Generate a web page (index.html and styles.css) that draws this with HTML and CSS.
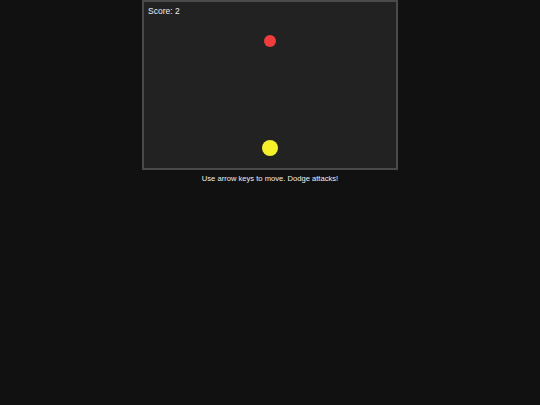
FILE: index.html
```html
<!DOCTYPE html>
<html>
<head>
<meta charset="utf-8">
<link rel="stylesheet" href="styles.css">
</head>
<body>
<div class="page">
  <div class="game">
    <div class="score">Score: 2</div>
    <div class="dot enemy"></div>
    <div class="dot player"></div>
  </div>
  <p class="hint">Use arrow keys to move. Dodge attacks!</p>
</div>
</body>
</html>
```
FILE: styles.css
```css
html, body {
  margin: 0;
  padding: 0;
  background: #111111;
  font-family: "Liberation Sans", Arial, sans-serif;
}
.page {
  display: flex;
  flex-direction: column;
  align-items: center;
}
.game {
  position: relative;
  width: 252px;
  height: 166px;
  background: #222222;
  border: 2px solid #4a4a4a;
}
.score {
  color: #eeeeee;
  font-size: 8.5px;
  padding: 4px 4px 0;
}
.dot {
  position: absolute;
  border-radius: 50%;
}
.enemy {
  width: 12px;
  height: 12px;
  left: 120px;
  top: 32.5px;
  background: #f03c3c;
}
.player {
  width: 16px;
  height: 16px;
  left: 117.5px;
  top: 138px;
  background: #f5f02a;
}
.hint {
  margin: 3.5px 0 0;
  color: #eeeeee;
  font-size: 7.6px;
}
```
